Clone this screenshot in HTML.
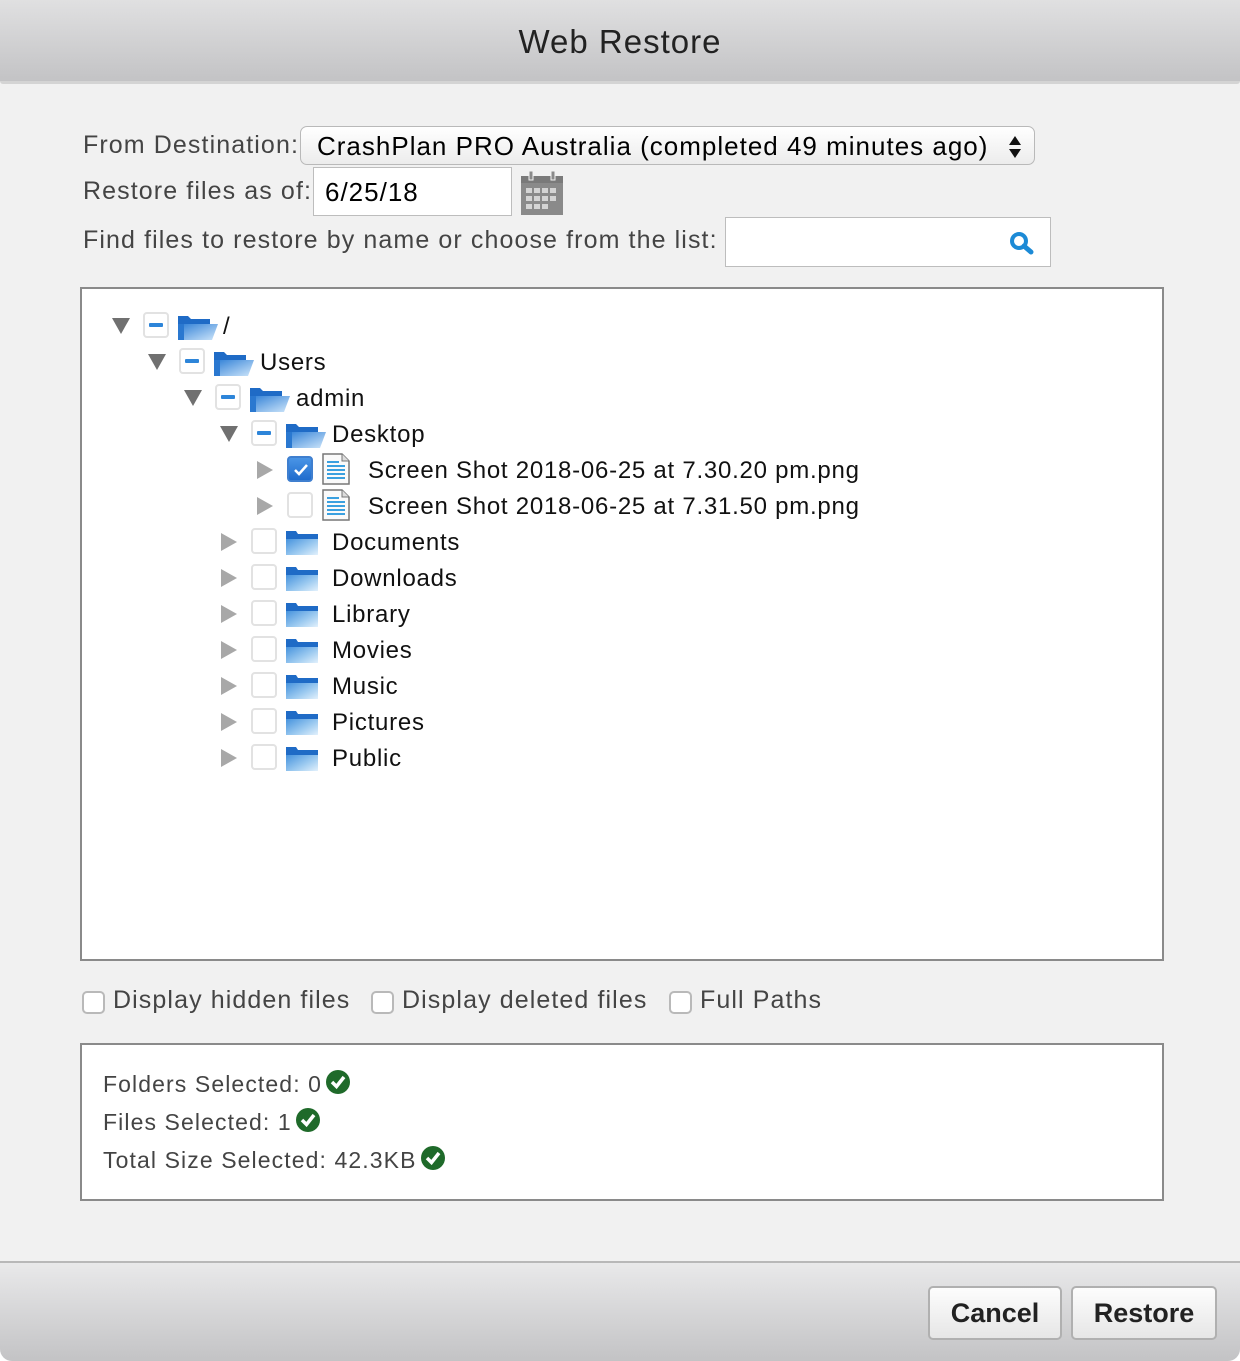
<!DOCTYPE html>
<html><head><meta charset="utf-8"><style>
*{margin:0;padding:0;box-sizing:border-box}
body{width:1240px;height:1361px;background:#fff;font-family:"Liberation Sans",sans-serif;position:relative;overflow:hidden}
.win{position:absolute;left:0;top:0;width:1240px;height:1361px;background:#f1f1f1;border-radius:0 0 12px 12px;overflow:hidden}
.hdr{position:absolute;left:0;top:0;width:1240px;height:84px;background:linear-gradient(#e0e0e1,#c3c3c5);border-bottom:3px solid #d4d4d4;border-radius:0 0 3px 3px}
.hdr div{position:absolute;left:0;right:0;top:23px;text-align:center;font-size:33px;color:#222;letter-spacing:1px}
.lbl{position:absolute;font-size:25px;color:#444;letter-spacing:1.1px;white-space:nowrap}
.a{position:absolute}
.tree{position:absolute;left:80px;top:287px;width:1084px;height:674px;background:#fff;border:2px solid #8a8a8a}
.row{position:absolute;height:36px;font-size:24px;color:#111}
.row span{position:absolute;top:6px;white-space:nowrap;letter-spacing:0.75px}
.tri{position:absolute;top:11px}
.cb{position:absolute;top:5px;width:26px;height:26px;border:2px solid #e2e2e2;border-radius:4px;background:#fff}
.cb.m::after{content:"";position:absolute;left:4px;top:9px;width:14px;height:4px;background:#2d85d9;border-radius:1px}
.cb.c{background:linear-gradient(#4a95e6,#1f6ccd);border-color:#3f7fcf}
.sum{position:absolute;left:80px;top:1043px;width:1084px;height:158px;background:#fff;border:2px solid #8a8a8a}
.sum div{position:absolute;left:21px;font-size:23px;color:#444;letter-spacing:1.1px;white-space:nowrap}
.sum svg{vertical-align:-2px;margin-left:4px}
.ft{position:absolute;left:0;top:1261px;width:1240px;height:100px;background:linear-gradient(#e9e9ea,#c3c3c5);border-top:2px solid #b8b8b8}
.btn{position:absolute;top:23px;height:54px;border:2px solid #b0b0b0;border-radius:5px;background:linear-gradient(#fdfdfd,#e6e6e6);font-weight:bold;font-size:27px;color:#222;text-align:center;line-height:50px}
.ck{position:absolute;top:991px;width:23px;height:23px;border:2px solid #b9b9b9;border-radius:5px;background:#fff}
</style></head><body><div class="win">
<div class="hdr"><div>Web Restore</div></div>

<div class="lbl" style="left:83px;top:131px">From Destination:</div>
<div class="a" style="left:300px;top:126px;width:735px;height:39px;border:1px solid #b9b9b9;border-radius:7px;background:linear-gradient(#fff,#ececec);font-size:26px;color:#000;padding:4px 0 0 16px;letter-spacing:1px;white-space:nowrap">CrashPlan PRO Australia (completed 49 minutes ago)
<svg style="position:absolute;right:12px;top:8px" width="14" height="24" viewBox="0 0 14 24"><path d="M7 1L13 10H1z M7 23L13 14H1z" fill="#111"/></svg></div>

<div class="lbl" style="left:83px;top:177px">Restore files as of:</div>
<div class="a" style="left:313px;top:167px;width:199px;height:49px;border:1px solid #bdbdbd;background:#fff;font-size:26px;color:#000;padding:9px 0 0 11px;letter-spacing:1px">6/25/18</div>
<svg class="a" style="left:520px;top:170px" width="44" height="46" viewBox="0 0 44 46"><rect x="1" y="6" width="42" height="39" fill="#8a8a8a"/><rect x="1" y="6" width="42" height="7" fill="#7a7a7a"/><rect x="9" y="1" width="4" height="9" fill="#8a8a8a" stroke="#f1f1f1"/><rect x="31" y="1" width="4" height="9" fill="#8a8a8a" stroke="#f1f1f1"/>
<g fill="#d4d4d4"><rect x="6" y="18" width="6" height="5"/><rect x="14" y="18" width="6" height="5"/><rect x="22" y="18" width="6" height="5"/><rect x="30" y="18" width="6" height="5"/><rect x="6" y="26" width="6" height="5"/><rect x="14" y="26" width="6" height="5"/><rect x="22" y="26" width="6" height="5"/><rect x="30" y="26" width="6" height="5"/><rect x="6" y="34" width="6" height="5"/><rect x="14" y="34" width="6" height="5"/><rect x="22" y="34" width="6" height="5"/></g></svg>

<div class="lbl" style="left:83px;top:226px">Find files to restore by name or choose from the list:</div>
<div class="a" style="left:725px;top:217px;width:326px;height:50px;border:1px solid #bdbdbd;background:#fff"><svg style="position:absolute;left:283px;top:13px" width="26" height="24" viewBox="0 0 26 24"><circle cx="10" cy="10" r="7" fill="none" stroke="#1c8ad6" stroke-width="4"/><path d="M15 15L22 21" stroke="#1c8ad6" stroke-width="5" stroke-linecap="round"/></svg></div>

<div class="tree"></div>

<svg width="0" height="0" style="position:absolute"><defs>
<linearGradient id="fg" x1="0" y1="0" x2="1" y2="1"><stop offset="0" stop-color="#2f7fd6"/><stop offset="1" stop-color="#cfe6fa"/></linearGradient>
<linearGradient id="cg" x1="0" y1="0" x2="1" y2="1"><stop offset="0" stop-color="#3d8ddb"/><stop offset="0.6" stop-color="#9ccaf0"/><stop offset="1" stop-color="#e3f1fc"/></linearGradient>
<symbol id="of" viewBox="0 0 40 26"><path d="M0 2h10l3 3h19v5H0z" fill="#1f6bc6"/><path d="M6 10h34l-6 16H0z" fill="url(#fg)"/><path d="M0 10h6v16H0z" fill="#2a78d0"/></symbol>
<symbol id="cf" viewBox="0 0 32 26"><path d="M0 2h10l2 3h20v4H0z" fill="#1f6bc6"/><path d="M0 8h32v18H0z" fill="url(#cg)"/><path d="M0 8h32v2H0z" fill="#1f6bc6"/></symbol>
<symbol id="fi" viewBox="0 0 28 32"><path d="M1 1h19l7 7v23H1z" fill="#fafafa" stroke="#777" stroke-width="1.5"/><path d="M20 1v7h7" fill="#ddd" stroke="#777"/><g fill="#3aa0e0"><rect x="5" y="8" width="12" height="2"/><rect x="5" y="12" width="18" height="2"/><rect x="5" y="16" width="18" height="2"/><rect x="5" y="20" width="18" height="2"/><rect x="5" y="24" width="18" height="2"/></g></symbol>
<symbol id="td" viewBox="0 0 18 16"><path d="M0 0h18L9 16z" fill="#707070"/></symbol>
<symbol id="tr" viewBox="0 0 16 18"><path d="M0 0v18L16 9z" fill="#a8a8a8"/></symbol>
<symbol id="gc" viewBox="0 0 24 24"><circle cx="12" cy="12" r="12" fill="#1f6a2a"/><path d="M6 12l4.5 4.5L18 7" fill="none" stroke="#fff" stroke-width="3.5"/></symbol>
</defs></svg>

<div class="row" style="left:0;top:307px"><svg class="tri" style="left:112px" width="18" height="16"><use href="#td"/></svg><div class="cb m" style="left:143px"></div><svg class="a" style="left:178px;top:7px" width="40" height="26"><use href="#of"/></svg><span style="left:223px">/</span></div>
<div class="row" style="left:0;top:343px"><svg class="tri" style="left:148px" width="18" height="16"><use href="#td"/></svg><div class="cb m" style="left:179px"></div><svg class="a" style="left:214px;top:7px" width="40" height="26"><use href="#of"/></svg><span style="left:260px">Users</span></div>
<div class="row" style="left:0;top:379px"><svg class="tri" style="left:184px" width="18" height="16"><use href="#td"/></svg><div class="cb m" style="left:215px"></div><svg class="a" style="left:250px;top:7px" width="40" height="26"><use href="#of"/></svg><span style="left:296px">admin</span></div>
<div class="row" style="left:0;top:415px"><svg class="tri" style="left:220px" width="18" height="16"><use href="#td"/></svg><div class="cb m" style="left:251px"></div><svg class="a" style="left:286px;top:7px" width="40" height="26"><use href="#of"/></svg><span style="left:332px">Desktop</span></div>
<div class="row" style="left:0;top:451px"><svg class="tri" style="left:257px;top:10px" width="16" height="18"><use href="#tr"/></svg><div class="cb c" style="left:287px"><svg style="position:absolute;left:3px;top:4px" width="18" height="16"><path d="M3 8l4 4 8-9" fill="none" stroke="#fff" stroke-width="2.5"/></svg></div><svg class="a" style="left:322px;top:2px" width="28" height="32"><use href="#fi"/></svg><span style="left:368px">Screen Shot 2018-06-25 at 7.30.20 pm.png</span></div>
<div class="row" style="left:0;top:487px"><svg class="tri" style="left:257px;top:10px" width="16" height="18"><use href="#tr"/></svg><div class="cb" style="left:287px"></div><svg class="a" style="left:322px;top:2px" width="28" height="32"><use href="#fi"/></svg><span style="left:368px">Screen Shot 2018-06-25 at 7.31.50 pm.png</span></div>
<div class="row" style="left:0;top:523px"><svg class="tri" style="left:221px;top:10px" width="16" height="18"><use href="#tr"/></svg><div class="cb" style="left:251px"></div><svg class="a" style="left:286px;top:6px" width="32" height="26"><use href="#cf"/></svg><span style="left:332px">Documents</span></div>
<div class="row" style="left:0;top:559px"><svg class="tri" style="left:221px;top:10px" width="16" height="18"><use href="#tr"/></svg><div class="cb" style="left:251px"></div><svg class="a" style="left:286px;top:6px" width="32" height="26"><use href="#cf"/></svg><span style="left:332px">Downloads</span></div>
<div class="row" style="left:0;top:595px"><svg class="tri" style="left:221px;top:10px" width="16" height="18"><use href="#tr"/></svg><div class="cb" style="left:251px"></div><svg class="a" style="left:286px;top:6px" width="32" height="26"><use href="#cf"/></svg><span style="left:332px">Library</span></div>
<div class="row" style="left:0;top:631px"><svg class="tri" style="left:221px;top:10px" width="16" height="18"><use href="#tr"/></svg><div class="cb" style="left:251px"></div><svg class="a" style="left:286px;top:6px" width="32" height="26"><use href="#cf"/></svg><span style="left:332px">Movies</span></div>
<div class="row" style="left:0;top:667px"><svg class="tri" style="left:221px;top:10px" width="16" height="18"><use href="#tr"/></svg><div class="cb" style="left:251px"></div><svg class="a" style="left:286px;top:6px" width="32" height="26"><use href="#cf"/></svg><span style="left:332px">Music</span></div>
<div class="row" style="left:0;top:703px"><svg class="tri" style="left:221px;top:10px" width="16" height="18"><use href="#tr"/></svg><div class="cb" style="left:251px"></div><svg class="a" style="left:286px;top:6px" width="32" height="26"><use href="#cf"/></svg><span style="left:332px">Pictures</span></div>
<div class="row" style="left:0;top:739px"><svg class="tri" style="left:221px;top:10px" width="16" height="18"><use href="#tr"/></svg><div class="cb" style="left:251px"></div><svg class="a" style="left:286px;top:6px" width="32" height="26"><use href="#cf"/></svg><span style="left:332px">Public</span></div>

<div class="ck" style="left:82px"></div><div class="lbl" style="left:113px;top:986px">Display hidden files</div>
<div class="ck" style="left:371px"></div><div class="lbl" style="left:402px;top:986px">Display deleted files</div>
<div class="ck" style="left:669px"></div><div class="lbl" style="left:700px;top:986px">Full Paths</div>

<div class="sum">
<div style="top:25px">Folders Selected: 0<svg width="24" height="24"><use href="#gc"/></svg></div>
<div style="top:63px">Files Selected: 1<svg width="24" height="24"><use href="#gc"/></svg></div>
<div style="top:101px">Total Size Selected: 42.3KB<svg width="24" height="24"><use href="#gc"/></svg></div>
</div>

<div class="ft">
<div class="btn" style="left:928px;width:134px">Cancel</div>
<div class="btn" style="left:1071px;width:146px">Restore</div>
</div>
</div></body></html>
